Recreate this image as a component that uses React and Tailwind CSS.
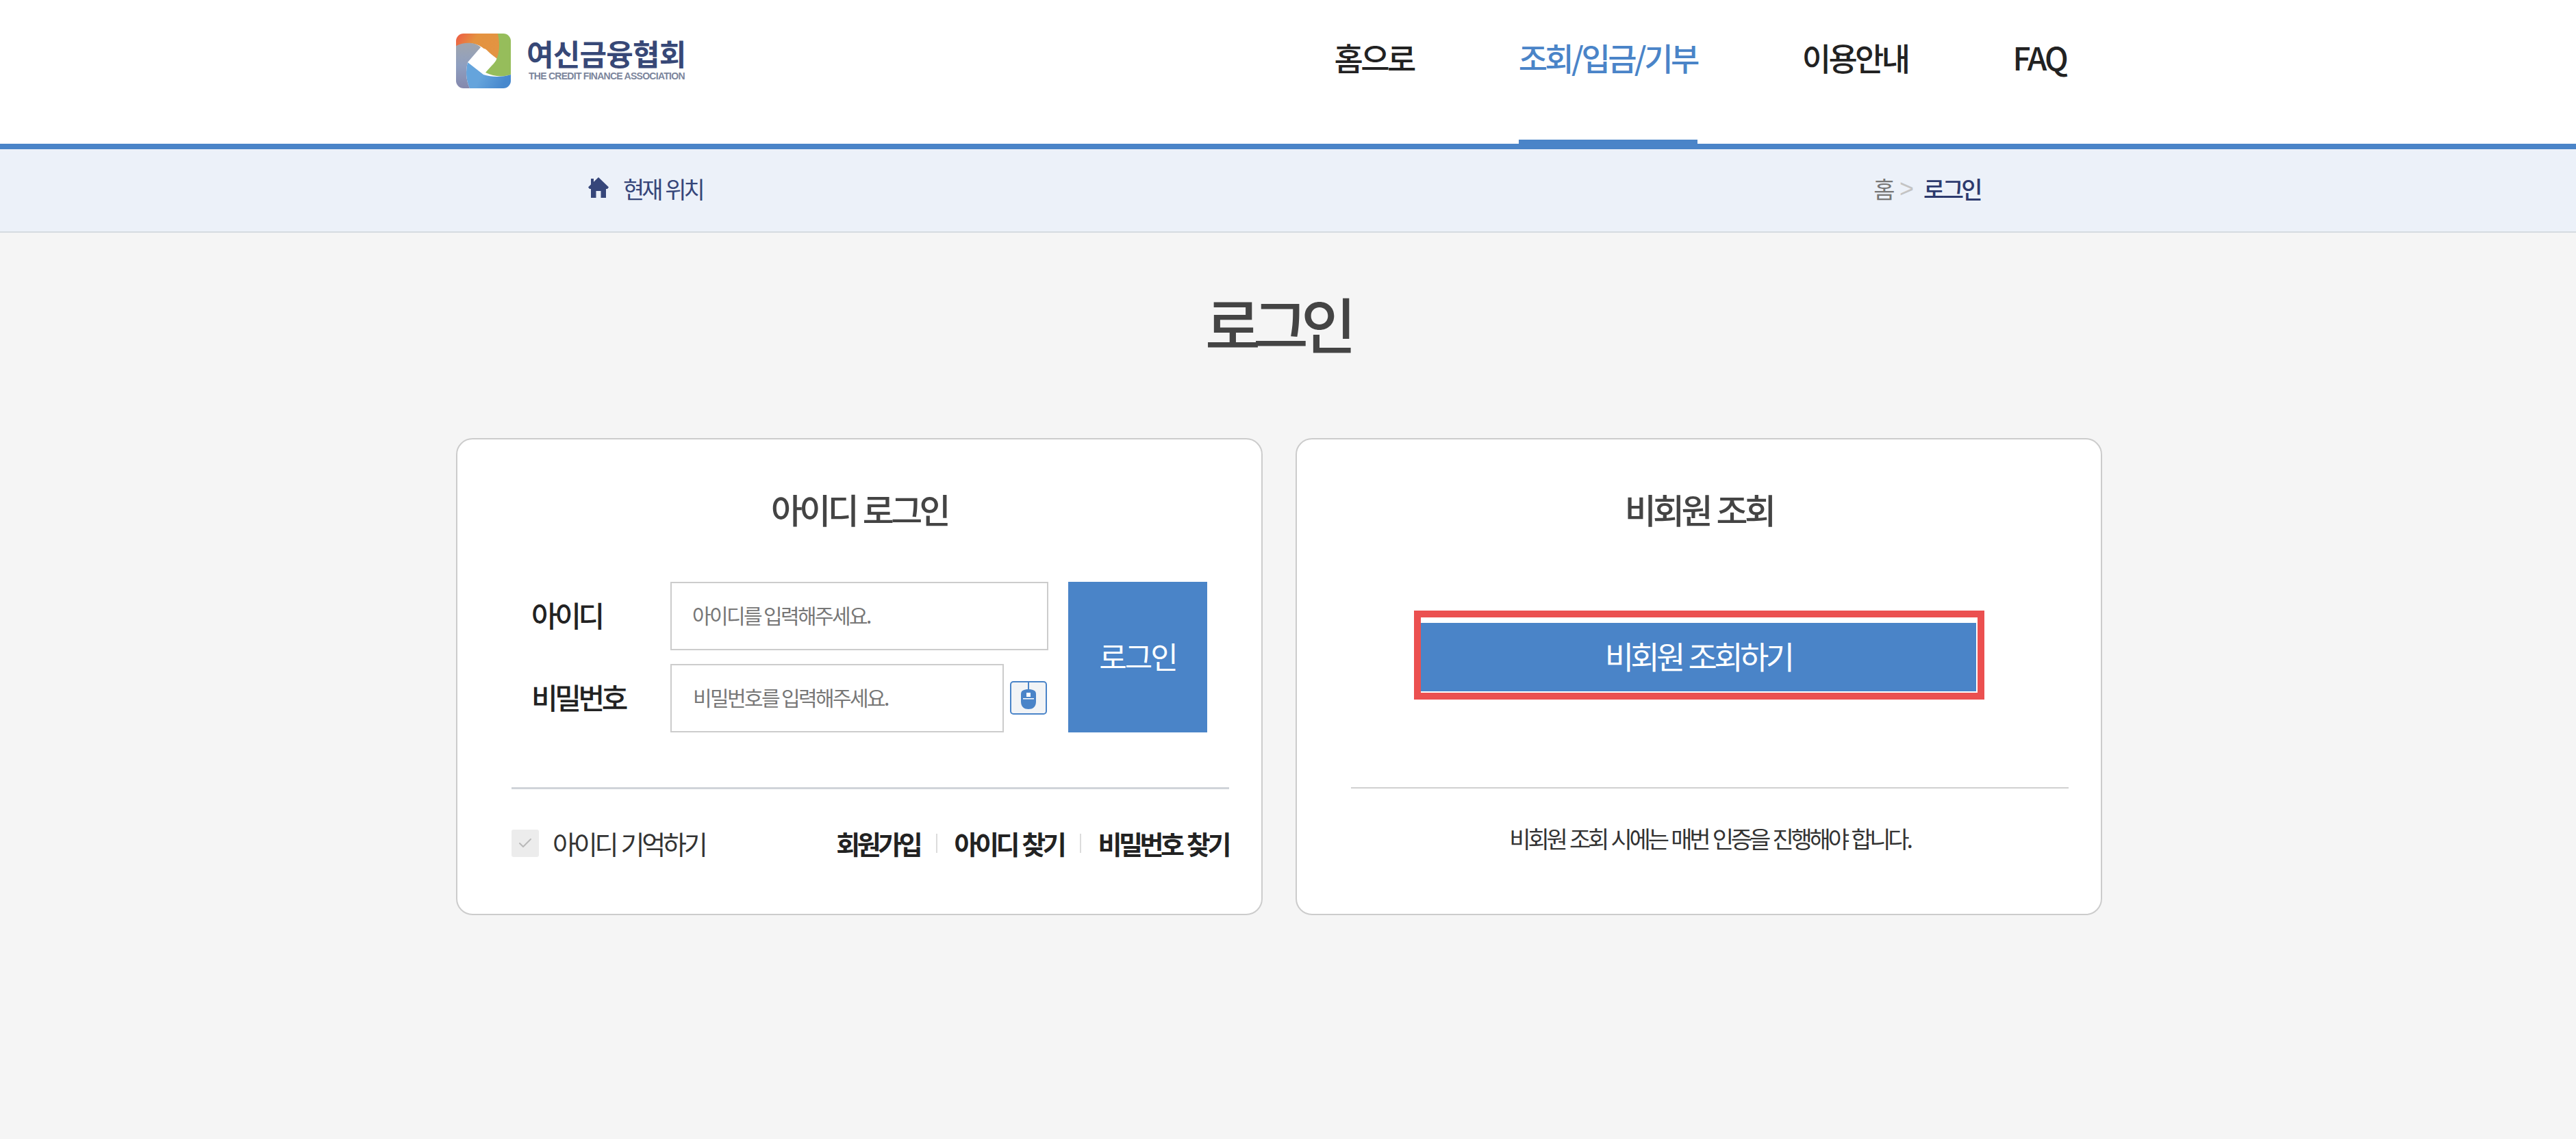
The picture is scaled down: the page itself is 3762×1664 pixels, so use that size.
import { Check } from 'lucide-react'

const menus = [
  { texto: '홈으로', clase: 'tracking-[-3.6px] text-[#222]' },
  { texto: '조회/입금/기부', clase: 'tracking-[-3.6px] text-[#4a84c8] border-b-[6px] border-[#4a84c8]' },
  { texto: '이용안내', clase: 'tracking-[-3.6px] text-[#222]' },
  { texto: 'FAQ', clase: 'tracking-[-2.8px] text-[#222]' },
]

const Logo = () => (
  <div className="flex items-start gap-[23px] pt-[49px]">
    <svg width="80" height="80" viewBox="0 0 80 80">
      <defs>
        <clipPath id="logoClip"><rect width="80" height="80" rx="11" /></clipPath>
        <linearGradient id="logoOrange" x1="0" y1="0" x2="1" y2="0.4">
          <stop offset="0" stopColor="#ee5a45" />
          <stop offset="0.45" stopColor="#e4923f" />
          <stop offset="1" stopColor="#e39442" />
        </linearGradient>
        <linearGradient id="logoGray" x1="0" y1="0" x2="0" y2="1">
          <stop offset="0" stopColor="#a0a5ad" />
          <stop offset="0.5" stopColor="#8f9fc0" />
          <stop offset="1" stopColor="#8488ad" />
        </linearGradient>
        <linearGradient id="logoBlue" x1="0" y1="0" x2="1" y2="0.3">
          <stop offset="0.45" stopColor="#65a4dc" />
          <stop offset="1" stopColor="#4788cd" />
        </linearGradient>
      </defs>
      <g clipPath="url(#logoClip)">
        <path d="M0 0H64V40L38 20C28 13 12 13 0 19Z" fill="url(#logoOrange)" />
        <path d="M61 0H80V60C68 64 55 63 43 57L58 40C64 28 64 14 61 0Z" fill="#96bd5b" />
        <path d="M17 42L40 60C52 64 68 64 80 60V80H20C14 67 14 54 17 42Z" fill="url(#logoBlue)" />
        <path d="M0 18C12 12 28 12 36 20L17 42C14 54 14 67 20 80H0Z" fill="url(#logoGray)" />
        <rect x="26" y="25" width="28" height="28" rx="7" fill="#fff" transform="rotate(45 40 39)" />
      </g>
    </svg>
    <div className="flex flex-col pt-[3px]">
      <span className="text-[43px] leading-[50px] font-bold text-[#374877] tracking-[-0.8px]">여신금융협회</span>
      <span className="mt-[1px] ml-[3px] text-[14px] leading-[16px] font-bold text-[#7b859c] tracking-[-0.73px] font-['Liberation_Sans',sans-serif] whitespace-nowrap">THE CREDIT FINANCE ASSOCIATION</span>
    </div>
  </div>
)

const MouseIcon = () => (
  <svg width="54" height="50" viewBox="0 0 54 50" className="block shrink-0">
    <rect x="1" y="1" width="52" height="47" rx="4" fill="#f2f4f6" stroke="#4a84c8" strokeWidth="2" />
    <path d="M27 1V12" stroke="#4a84c8" strokeWidth="2" />
    <path d="M16 19C16 14 20 12 27 12C34 12 38 14 38 19V30C38 38 33 41 27 41C21 41 16 38 16 30Z" fill="#4a84c8" />
    <rect x="24" y="17" width="6" height="6" fill="#fff" />
    <rect x="19" y="25" width="16" height="1.5" fill="#fff" />
  </svg>
)

const Separador = () => <span className="w-[2px] h-[28px] bg-[#dcdcdc]" />

export default function App() {
  return (
    <div className="min-h-[1664px] bg-[#f5f5f5] font-['Noto_Sans_CJK_KR','Noto_Sans',sans-serif]">
      {/* 헤더 */}
      <header className="h-[218px] bg-white border-b-[8px] border-[#4a84c8]">
        <div className="ml-[666px] w-[2404px] h-full flex justify-between">
          <Logo />
          <nav className="flex gap-[153px] pr-[52px] h-full">
            {menus.map((m) => (
              <a key={m.texto} className={`h-full pt-[53px] text-[46px] leading-[60px] font-medium ${m.clase}`}>
                {m.texto}
              </a>
            ))}
          </nav>
        </div>
      </header>

      {/* 현재 위치 */}
      <div className="h-[122px] bg-[#ecf1f9] border-b-2 border-[#d5dbe0]">
        <div className="ml-[858px] w-[2034px] h-full pb-[4px] flex items-center justify-between">
          <div className="flex items-center gap-[20px] text-[#36467a]">
            <svg width="32" height="32" viewBox="0 0 32 32" className="-mt-[4px]">
              <path d="M16 1L31 15.5L29 18H27V31H19.5V21H12.5V31H5V18H3L1 15.5L5 11.5V3H9V7.7Z" fill="#36467a" />
            </svg>
            <span className="text-[34px] leading-[40px] tracking-[-4px] [word-spacing:3px]">현재 위치</span>
          </div>
          <div className="flex items-center text-[34px] leading-[40px]">
            <span className="text-[#777] tracking-[-2.5px]">홈</span>
            <span className="ml-[9px] mr-[14px] text-[#c4c4c4] text-[36px] font-['Liberation_Sans',sans-serif]">&gt;</span>
            <span className="text-[#2c3a6e] font-medium tracking-[-3.6px]">로그인</span>
          </div>
        </div>
      </div>

      <main className="ml-[666px] w-[2404px]">
        <h1 className="pt-[73px] pr-[6px] h-[300px] text-center text-[88px] leading-[116px] font-medium text-[#444444] tracking-[-11px]">로그인</h1>

        <div className="flex gap-[48px]">
          {/* 아이디 로그인 */}
          <section className="w-[1178px] h-[697px] bg-white border-2 border-[#cccccc] rounded-[24px] flex flex-col">
            <h3 className="mt-[76px] text-center text-[50px] leading-[50px] font-medium text-[#444444] tracking-[-4.6px] [word-spacing:3px]">아이디 로그인</h3>
            <div className="mt-[82px] pl-[79px] pr-[47px]">
              <div className="ml-[29px] flex gap-[29px] pr-[32px]">
                <div className="flex flex-col gap-[20px]">
                  <div className="flex items-center">
                    <label className="w-[203px] pb-[6px] text-[42px] font-medium text-[#222] tracking-[-4.4px]">아이디</label>
                    <input
                      placeholder="아이디를 입력해주세요."
                      className="w-[552px] h-[100px] pl-[30px] pb-[5px] bg-white border-2 border-[#cccccc] text-[30px] tracking-[-2.6px] placeholder:text-[#777] outline-none"
                    />
                  </div>
                  <div className="flex items-center">
                    <label className="w-[203px] pb-[6px] text-[42px] font-medium text-[#222] tracking-[-4.4px]">비밀번호</label>
                    <input
                      placeholder="비밀번호를 입력해주세요."
                      className="w-[487px] h-[100px] pl-[31px] pb-[5px] bg-white border-2 border-[#cccccc] text-[30px] tracking-[-2.6px] placeholder:text-[#777] outline-none"
                    />
                    <span className="ml-[9px]"><MouseIcon /></span>
                  </div>
                </div>
                <button className="w-[203px] h-[220px] pb-[4px] bg-[#4a84c8] text-white text-[44px] tracking-[-3px]">로그인</button>
              </div>
              <div className="mt-[80px] h-[3px] bg-[#d0d4d9]" />
              <div className="mt-[59px] flex items-center justify-between">
                <div className="flex items-center gap-[20px]">
                  <span className="w-[40px] h-[40px] bg-[#ececec] rounded-[3px] flex items-center justify-center">
                    <Check size={24} strokeWidth={2} className="text-[#b9b9b9]" />
                  </span>
                  <span className="text-[38px] leading-[40px] text-[#333] tracking-[-4.2px] [word-spacing:3px]">아이디 기억하기</span>
                </div>
                <div className="flex items-center gap-[24px] pr-[1px] text-[38px] leading-[40px] font-semibold text-[#222] tracking-[-4.4px] [word-spacing:3px]">
                  <a>회원가입</a>
                  <Separador />
                  <a>아이디 찾기</a>
                  <Separador />
                  <a>비밀번호 찾기</a>
                </div>
              </div>
            </div>
          </section>

          {/* 비회원 조회 */}
          <section className="w-[1178px] h-[697px] bg-white border-2 border-[#cccccc] rounded-[24px] flex flex-col">
            <h3 className="mt-[76px] text-center text-[50px] leading-[50px] font-medium text-[#444444] tracking-[-4.6px] [word-spacing:3px]">비회원 조회</h3>
            <div className="mt-[124px] self-center w-[833px] h-[130px] border-[10px] border-[#eb5050] bg-white pt-[8px] pr-[2px] pb-[2px]">
              <button className="w-full h-full pb-[6px] bg-[#4a84c8] text-white text-[46px] tracking-[-4.6px] [word-spacing:3px]">비회원 조회하기</button>
            </div>
            <div className="mt-[128px] pl-[79px] pr-[47px]">
              <div className="h-[2px] bg-[#d0d0d0]" />
              <p className="mt-[53px] text-center text-[34px] leading-[40px] text-[#333] tracking-[-4.2px] [word-spacing:3px]">비회원 조회 시에는 매번 인증을 진행해야 합니다.</p>
            </div>
          </section>
        </div>
      </main>
    </div>
  )
}
